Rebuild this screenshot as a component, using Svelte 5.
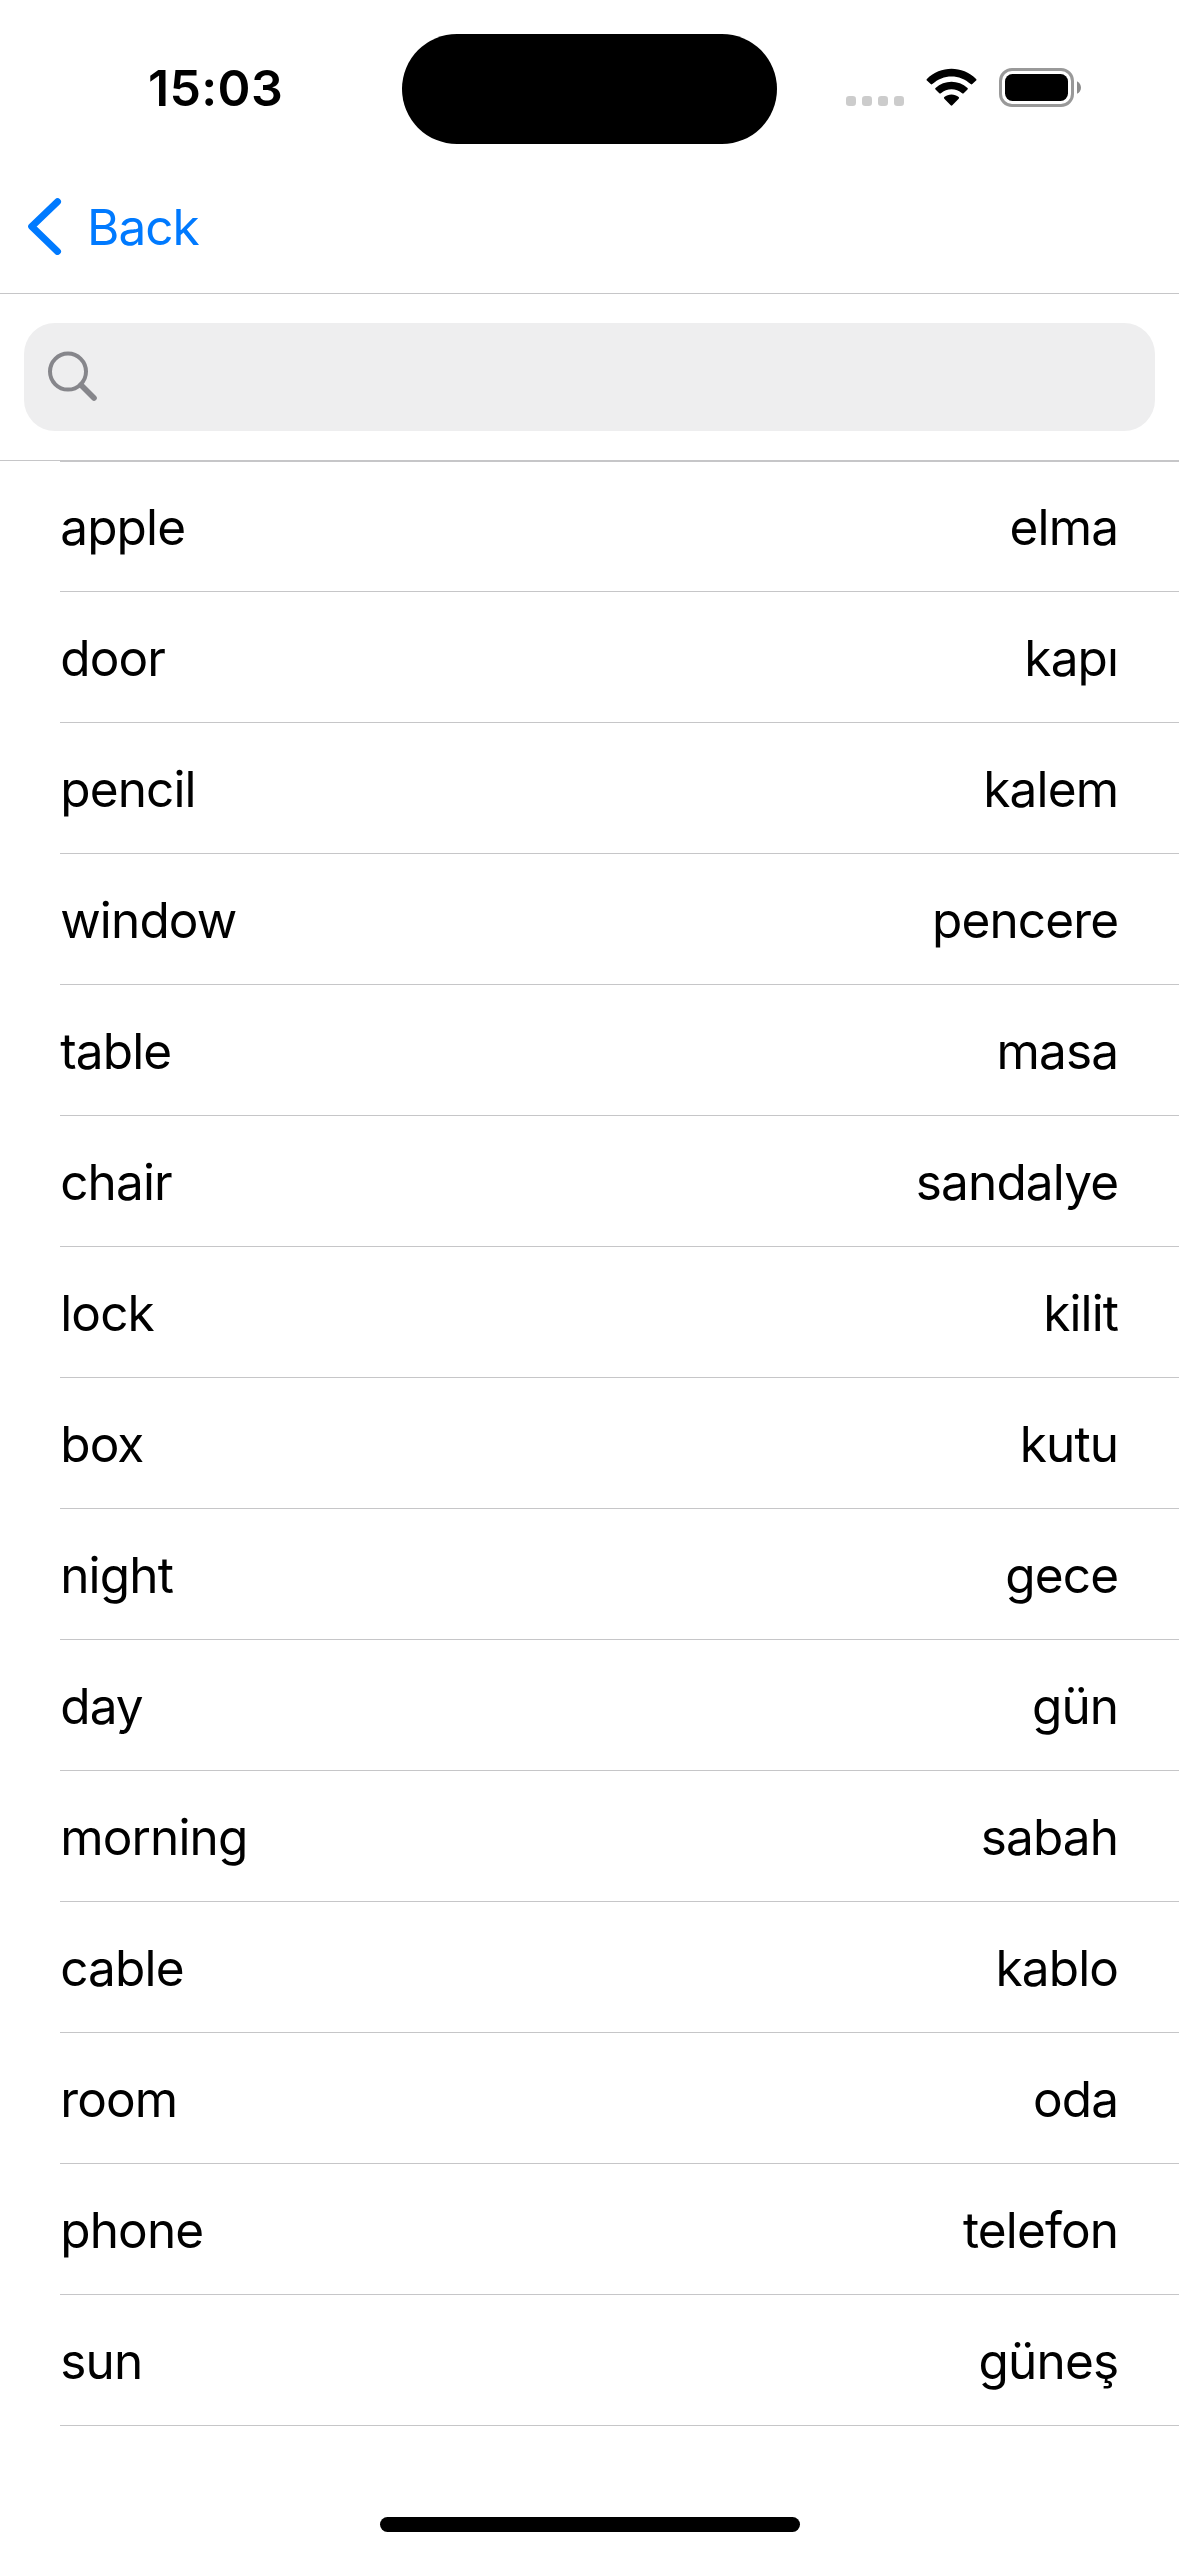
<script>
  const words = [
    ['apple', 'elma'],
    ['door', 'kapı'],
    ['pencil', 'kalem'],
    ['window', 'pencere'],
    ['table', 'masa'],
    ['chair', 'sandalye'],
    ['lock', 'kilit'],
    ['box', 'kutu'],
    ['night', 'gece'],
    ['day', 'gün'],
    ['morning', 'sabah'],
    ['cable', 'kablo'],
    ['room', 'oda'],
    ['phone', 'telefon'],
    ['sun', 'güneş'],
  ];
</script>

<div class="screen">
  <header class="status">
    <div class="time">15:03</div>
    <div class="island"></div>
    <div class="indicators">
      <svg width="236" height="40" viewBox="846 68 236 40">
        <g fill="#cccccc">
          <rect x="846" y="96" width="10" height="10" rx="3.2" />
          <rect x="862" y="96" width="10" height="10" rx="3.2" />
          <rect x="878" y="96" width="10" height="10" rx="3.2" />
          <rect x="894" y="96" width="10" height="10" rx="3.2" />
        </g>
        <path d="M926.9 78.9C940.5 65.5 962.5 65.5 976.1 78.9Q976.9 79.7 976.1 80.5L972.3 84.1Q971.5 84.8 970.7 84.1C959.8 73.8 943.2 73.8 932.3 84.1Q931.5 84.8 930.7 84.1L926.9 80.5Q926.1 79.7 926.9 78.9Z" />
        <path d="M935.5 88C944.5 79.5 958.5 79.5 967.5 88Q968.3 88.8 967.5 89.6L963.7 93.2Q962.9 93.9 962.1 93.2C956 87.8 947 87.8 940.9 93.2Q940.1 93.9 939.3 93.2L935.5 89.6Q934.7 88.8 935.5 88Z" />
        <path d="M944.3 97.1C948.3 93.6 954.7 93.6 958.7 97.1Q959.5 97.9 958.7 98.7L952.3 105.3Q951.5 106.1 950.7 105.3L944.3 98.7Q943.5 97.9 944.3 97.1Z" />
        <rect x="1000.5" y="69.5" width="72" height="36" rx="11.5" fill="none" stroke="#999" stroke-width="3" />
        <rect x="1005" y="74" width="63" height="27" rx="7.5" />
        <path d="M1077 81.2C1082.3 83.6 1082.3 91.4 1077 93.8Z" fill="#8c8c8c" />
      </svg>
    </div>
  </header>

  <nav class="nav">
    <svg width="34" height="57" viewBox="0 0 34 57">
      <path d="M29.5 3.8L3.7 28.6L29.5 53.4" fill="none" stroke="#007aff" stroke-width="7" stroke-linecap="round" stroke-linejoin="round" />
    </svg>
    <span class="back">Back</span>
  </nav>

  <div class="search">
    <div class="field">
      <svg width="50" height="50" viewBox="0 0 50 50" fill="none" stroke="#86868b">
        <circle cx="20" cy="20.6" r="18" stroke-width="4" />
        <path d="M33 34L46 47" stroke-width="5.6" stroke-linecap="round" />
      </svg>
    </div>
  </div>

  <ul class="list">
    {#each words as [en, tr]}
      <li><span>{en}</span><span>{tr}</span></li>
    {/each}
  </ul>

  <div class="home"></div>
</div>

<style>
  :global(body) {
    margin: 0;
    background: #fff;
  }
  .screen {
    width: 1179px;
    height: 2556px;
    display: flex;
    flex-direction: column;
    background: #fff;
    color: #000;
    font-family: Inter, sans-serif;
    font-size: 49.5px;
    letter-spacing: -0.85px;
    overflow: hidden;
  }
  .status {
    display: grid;
    grid-template-columns: 402px 375px 1fr;
    height: 177px;
    box-sizing: border-box;
    padding-top: 34px;
    align-items: start;
  }
  .time {
    padding: 24px 0 0 148px;
    font-size: 50px;
    line-height: 60px;
    font-weight: 600;
    letter-spacing: 0.35px;
  }
  .island {
    height: 110px;
    border-radius: 55px;
    background: #000;
  }
  .indicators {
    padding: 34px 0 0 69px;
  }
  svg {
    display: block;
    flex: none;
  }
  .nav {
    height: 117px;
    box-sizing: border-box;
    border-bottom: 1px solid #c6c6c8;
    display: flex;
    align-items: flex-start;
    padding: 20px 0 0 28px;
  }
  .nav svg {
    margin-top: 1px;
  }
  .back {
    margin-left: 25px;
    line-height: 60px;
    letter-spacing: -1px;
    color: #007aff;
  }
  .search {
    height: 167px;
    box-sizing: border-box;
    padding: 29px 24px;
    border-bottom: 1px solid #c6c6c8;
  }
  .field {
    height: 108px;
    box-sizing: border-box;
    padding: 28px 24px;
    border-radius: 31px;
    background: #eeeeef;
  }
  .list {
    list-style: none;
    margin: 0 0 0 60px;
    padding: 0;
  }
  li {
    height: 131px;
    box-sizing: border-box;
    border-bottom: 1px solid #c6c6c8;
    padding: 36px 60.8px 0 0.2px;
    display: flex;
    justify-content: space-between;
    line-height: 60px;
  }
  li:first-child {
    border-top: 1px solid #c6c6c8;
    padding-top: 35px;
  }
  .home {
    width: 420px;
    height: 15px;
    margin: 91px auto 0;
    border-radius: 8px;
    background: #000;
  }
</style>
